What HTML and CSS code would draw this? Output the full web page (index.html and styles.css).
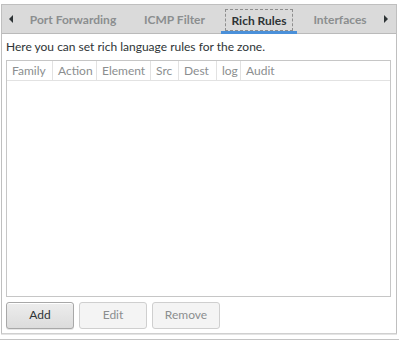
FILE: index.html
```html
<!DOCTYPE html>
<html lang="en">
<head>
    <meta charset="UTF-8">
    <title>Rich Rules</title>
    <link rel="stylesheet" href="styles.css">
</head>
<body>

    <div class="notebook">
        <div class="tabs">
            <span class="arrow-box"><span class="arrow left"></span></span>
            <span class="tab tab-port">Port Forwarding</span>
            <span class="tab tab-icmp">ICMP Filter</span>
            <span class="tab tab-rich active"><span class="focus">Rich Rules</span></span>
            <span class="tab tab-iface">Interfaces</span>
            <span class="arrow right"></span>
        </div>

        <div class="page">
            <p class="hint">Here you can set rich language rules for the zone.</p>

            <div class="tree">
                <div class="tree-head">
                    <span class="col c-family">Family</span>
                    <span class="col c-action">Action</span>
                    <span class="col c-element">Element</span>
                    <span class="col c-src">Src</span>
                    <span class="col c-dest">Dest</span>
                    <span class="col c-log">log</span>
                    <span class="col c-audit">Audit</span>
                </div>
            </div>

            <div class="buttons">
                <button class="btn">Add</button>
                <button class="btn" disabled>Edit</button>
                <button class="btn" disabled>Remove</button>
            </div>
        </div>
    </div>

    <div class="bottom-line"></div>

</body>
</html>
```

FILE: styles.css
```css
body {
    font-family: Lato, "DejaVu Sans", sans-serif;
    font-size: 12px;
    color: #2e3436;
    margin: 0;
    padding: 0;
    background-color: #ffffff;
    width: 399px;
    height: 340px;
    overflow: hidden;
}

.notebook {
    margin: 4px 2px 0 1px;
    border: 1px solid #bfbfbf;
    border-bottom-color: #d0d0d0;
    height: 330px;
    box-shadow: 0 1px 0 #e4e4e4;
    box-sizing: border-box;
}

/* tab strip */
.tabs {
    height: 29px;
    background-color: #dadada;
    border-bottom: 1px solid #bababa;
    display: flex;
    box-sizing: border-box;
    white-space: nowrap;
}

.arrow-box {
    width: 20px;
    display: flex;
    align-items: center;
    flex-shrink: 0;
}

.arrow {
    width: 0;
    height: 0;
    border-top: 4px solid transparent;
    border-bottom: 4px solid transparent;
    flex-shrink: 0;
}

.arrow.left {
    border-right: 4px solid #2e3436;
    margin-left: 7px;
}

.arrow.right {
    border-left: 4px solid #2e3436;
    align-self: center;
    margin-left: 1px;
}

.tab {
    color: #8b8e8f;
    font-weight: bold;
    height: 28px;
    display: flex;
    align-items: center;
    justify-content: center;
    position: relative;
    flex-shrink: 0;
}

.tab-port { width: 102px; }
.tab-icmp { width: 93px; margin-left: 4px; }
.tab-rich { width: 76px; }
.tab-iface { width: 86px; }

.tab.active {
    color: #2e3436;
}

.tab.active::after {
    content: "";
    position: absolute;
    left: 0;
    right: 0;
    bottom: -1px;
    height: 3px;
    background-color: #4a90d9;
}

.focus {
    width: 68px;
    height: 22px;
    line-height: 21px;
    text-align: center;
    border: 1px dashed #8e8e8e;
    margin-top: 1px;
    box-sizing: border-box;
}

/* page content */
.page {
    padding: 0 5px 0 4px;
}

.hint {
    margin: 0;
    height: 26px;
    line-height: 26px;
}

.tree {
    height: 237px;
    border: 1px solid #c6c6c6;
    box-sizing: border-box;
    background-color: #ffffff;
}

.tree-head {
    display: flex;
    height: 19px;
    border-bottom: 1px solid #e2e2e2;
    white-space: nowrap;
}

.col {
    color: #8b8e8f;
    padding-left: 5px;
    line-height: 19px;
    border-right: 1px solid #e2e2e2;
    box-sizing: border-box;
    overflow: hidden;
    flex-shrink: 0;
}

.c-family { width: 46px; }
.c-action { width: 44px; }
.c-element { width: 54px; }
.c-src { width: 28px; }
.c-dest { width: 38px; }
.c-log { width: 24px; }
.c-audit { width: 50px; border-right: none; }

.buttons {
    display: flex;
    gap: 5px;
    margin-top: 5px;
}

.btn {
    width: 68px;
    height: 27px;
    font-family: inherit;
    font-size: 12px;
    color: #2e3436;
    border: 1px solid #a8a8a8;
    border-radius: 3px;
    background-image: linear-gradient(to bottom, #ededed, #dcdcdc);
    box-shadow: inset 0 1px 0 #ffffff, 0 1px 0 #e6e6e6;
    padding: 0 0 2px;
}

.btn:disabled {
    color: #8b8e8f;
    border-color: #cfcfcf;
    background-image: none;
    background-color: #f4f4f4;
    box-shadow: none;
}

.bottom-line {
    margin-top: 5px;
    height: 1px;
    background-color: #c4c4c4;
}
```
